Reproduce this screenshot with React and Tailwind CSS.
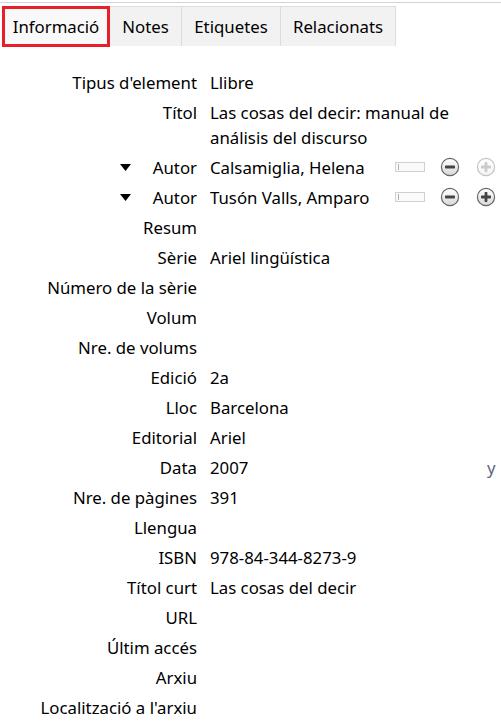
import React from "react";

const rows = [
  { label: "Tipus d'element", value: "Llibre" },
  { label: "Títol", value: "Las cosas del decir: manual de análisis del discurso" },
  { label: "Autor", value: "Calsamiglia, Helena", creator: true, last: false },
  { label: "Autor", value: "Tusón Valls, Amparo", creator: true, last: true },
  { label: "Resum", value: "" },
  { label: "Sèrie", value: "Ariel lingüística" },
  { label: "Número de la sèrie", value: "" },
  { label: "Volum", value: "" },
  { label: "Nre. de volums", value: "" },
  { label: "Edició", value: "2a" },
  { label: "Lloc", value: "Barcelona" },
  { label: "Editorial", value: "Ariel" },
  { label: "Data", value: "2007", date: true },
  { label: "Nre. de pàgines", value: "391" },
  { label: "Llengua", value: "" },
  { label: "ISBN", value: "978-84-344-8273-9" },
  { label: "Títol curt", value: "Las cosas del decir" },
  { label: "URL", value: "" },
  { label: "Últim accés", value: "" },
  { label: "Arxiu", value: "" },
  { label: "Localització a l'arxiu", value: "" },
];

function CircleButton({ type, disabled }) {
  const stroke = disabled ? "#c4c4c4" : "#666666";
  const fill = disabled ? "#f4f4f4" : "#d8d8d8";
  const bar = disabled ? "#cccccc" : "#444444";
  const id = `g-${type}-${disabled ? 1 : 0}`;
  return (
    <svg width="20" height="20" viewBox="0 0 20 20">
      <defs>
        <linearGradient id={id} x1="0" y1="0" x2="0" y2="1">
          <stop offset="0" stopColor="#ffffff" />
          <stop offset="1" stopColor={fill} />
        </linearGradient>
      </defs>
      <circle cx="10" cy="10" r="8.6" fill={`url(#${id})`} stroke={stroke} strokeWidth="1.2" />
      <rect x="5" y="8.6" width="10" height="2.8" rx="0.7" fill={bar} />
      {type === "plus" && <rect x="8.6" y="5" width="2.8" height="10" rx="0.7" fill={bar} />}
    </svg>
  );
}

export default function App() {
  return (
    <div
      className="w-[501px] h-[727px] bg-white overflow-hidden text-[16.8px] text-black"
      style={{ fontFamily: '"Noto Sans", "Open Sans", sans-serif' }}
    >
      <div className="h-[2px]" />
      <div className="border-t border-[#d4d4d4] pt-[3px] pl-[2px] flex">
        <div className="w-[108px] h-[41px] border-[3px] border-[#e81f2b] bg-[#f9f9f9] flex items-center justify-center">
          Informació
        </div>
        <div className="w-[72px] h-[40px] border-t border-r border-[#dcdcdc] bg-[#f2f2f2] flex items-center justify-center">
          Notes
        </div>
        <div className="w-[99px] h-[40px] border-t border-r border-[#dcdcdc] bg-[#f2f2f2] flex items-center justify-center">
          Etiquetes
        </div>
        <div className="w-[115px] h-[40px] border-t border-r border-[#dcdcdc] bg-[#f2f2f2] flex items-center justify-center">
          Relacionats
        </div>
      </div>

      <div className="pt-[20px] flex flex-col">
        {rows.map((r, i) => (
          <div key={i} className="flex items-start py-[2.5px] leading-[25px]">
            <div className="w-[197px] shrink-0 flex justify-end items-center h-auto">
              {r.creator && (
                <svg width="11" height="7" viewBox="0 0 11 7" className="mr-[22px]">
                  <polygon points="0,0 11,0 5.5,7" fill="#000" />
                </svg>
              )}
              <span className="whitespace-nowrap">{r.label}</span>
            </div>
            <div className="ml-[13px] w-[250px] shrink-0">
              <span>{r.value}</span>
            </div>
            {r.creator && (
              <div className="flex items-center h-[25px] -ml-[65px]">
                <div className="w-[30px] h-[10px] border border-[#d0d0d0] bg-[#fafafa] flex items-center pl-[2px]">
                  <div className="w-[1px] h-[6px] bg-[#b0b0b0]" />
                </div>
                <div className="ml-[15px]">
                  <CircleButton type="minus" />
                </div>
                <div className="ml-[16px]">
                  <CircleButton type="plus" disabled={!r.last} />
                </div>
              </div>
            )}
            {r.date && <div className="ml-[27px] text-[#5a6680]">y</div>}
          </div>
        ))}
      </div>
    </div>
  );
}
